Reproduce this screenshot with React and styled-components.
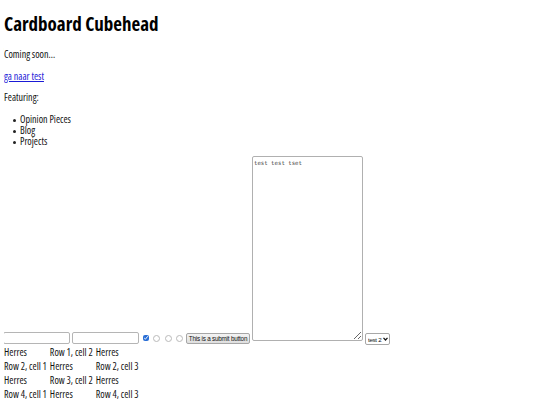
import React from "react";
import styled, { createGlobalStyle } from "styled-components";

const Global = createGlobalStyle`
  html, body { background: #fff; }
  body {
    margin: 5px 4px;
    font-family: "Open Sans", "DejaVu Sans", sans-serif;
    font-stretch: condensed;
    font-size: 10px;
    line-height: 11.6px;
    color: #111;
  }
`;

const Title = styled.h1`
  font-size: 19px;
  line-height: 22px;
  font-weight: bold;
  font-stretch: condensed;
  margin: 8px 0 14px;
  color: #000;
`;

const Para = styled.p`
  margin: 10px 0;
`;

const Link = styled.a`
  color: #1a1ad6;
  text-decoration: underline;
`;

const List = styled.ul`
  margin: 10px 0 9px;
  padding-left: 16px;
  list-style: none;
`;

const Item = styled.li`
  position: relative;
  line-height: 11px;
  &::before {
    content: "";
    position: absolute;
    left: -7px;
    top: 5px;
    width: 3px;
    height: 3px;
    border-radius: 50%;
    background: #222;
  }
`;

const FormRow = styled.form`
  display: flex;
  align-items: flex-end;
  margin: 0 0 0 -1px;
`;

const TextInput = styled.input`
  box-sizing: border-box;
  width: 67px;
  height: 12px;
  border: 1px solid #b5b5b5;
  border-radius: 2px;
  margin: 0 2px 1px 0;
  padding: 0;
  background: #fff;
`;

const Check = styled.input`
  width: 6px;
  height: 6px;
  margin: 0 4px 4px 2px;
  accent-color: #2a6fd6;
`;

const Radio = styled.input`
  width: 7px;
  height: 7px;
  margin: 0 ${(p) => p.$gap}px 3px 0;
  opacity: 0.5;
`;

const Submit = styled.button`
  box-sizing: border-box;
  width: 64px;
  height: 11px;
  padding: 0;
  margin: 0 2px 1px 0;
  font-family: "Liberation Sans", Arial, sans-serif;
  font-stretch: normal;
  font-size: 6.3px;
  letter-spacing: -0.2px;
  line-height: 9px;
  white-space: nowrap;
  color: #111;
  background: linear-gradient(#f4f4f4, #dedede);
  border: 1px solid #a6a6a6;
  border-radius: 2px;
`;

const Area = styled.textarea`
  box-sizing: border-box;
  width: 111px;
  height: 185px;
  margin: 0 2px 4px 0;
  padding: 3px 1px;
  font-family: "DejaVu Sans Mono", monospace;
  font-stretch: normal;
  font-size: 5.7px;
  line-height: 7px;
  color: #444;
  border: 1px solid #b0b0b0;
  border-radius: 2px;
  resize: both;
`;

const SelectWrap = styled.span`
  position: relative;
  display: inline-block;
  height: 12px;
`;

const SelectBox = styled.select`
  box-sizing: border-box;
  appearance: none;
  height: 12px;
  width: 25px;
  padding: 0 0 0 2px;
  margin: 0;
  font-family: "Liberation Sans", Arial, sans-serif;
  font-stretch: normal;
  font-size: 6.2px;
  letter-spacing: -0.3px;
  border: 1px solid #a8a8a8;
  border-radius: 2px;
  background: #fff;
  color: #111;
`;

const Chevron = styled.svg`
  position: absolute;
  right: 2px;
  top: 4px;
  width: 5px;
  height: 4px;
  pointer-events: none;
`;

const Table = styled.table`
  border-collapse: separate;
  border-spacing: 0;
  margin-top: 1px;
`;

const Cell = styled.td`
  padding: 1px 3px 1.4px 0;
  line-height: 11.6px;
  white-space: nowrap;
`;

const rows = [
  ["Herres", "Row 1, cell 2", "Herres"],
  ["Row 2, cell 1", "Herres", "Row 2, cell 3"],
  ["Herres", "Row 3, cell 2", "Herres"],
  ["Row 4, cell 1", "Herres", "Row 4, cell 3"],
];

export default function App() {
  return (
    <>
      <Global />
      <Title>Cardboard Cubehead</Title>
      <Para>Coming soon...</Para>
      <Para>
        <Link href="#">ga naar test</Link>
      </Para>
      <Para>Featuring:</Para>
      <List>
        <Item>Opinion Pieces</Item>
        <Item>Blog</Item>
        <Item>Projects</Item>
      </List>
      <FormRow onSubmit={(e) => e.preventDefault()}>
        <TextInput type="text" />
        <TextInput type="text" />
        <Check type="checkbox" defaultChecked />
        <Radio type="radio" name="r" $gap={5} />
        <Radio type="radio" name="r" $gap={4} />
        <Radio type="radio" name="r" $gap={3} />
        <Submit type="submit">This is a submit button</Submit>
        <Area defaultValue="test test tset" />
        <SelectWrap>
          <SelectBox defaultValue="test 2">
            <option>test 1</option>
            <option>test 2</option>
          </SelectBox>
          <Chevron viewBox="0 0 5 4">
            <path d="M0.5 0.8 L2.5 3 L4.5 0.8" fill="none" stroke="#111" strokeWidth="1.2" />
          </Chevron>
        </SelectWrap>
      </FormRow>
      <Table>
        <tbody>
          {rows.map((r, i) => (
            <tr key={i}>
              {r.map((c, j) => (
                <Cell key={j}>{c}</Cell>
              ))}
            </tr>
          ))}
        </tbody>
      </Table>
    </>
  );
}
